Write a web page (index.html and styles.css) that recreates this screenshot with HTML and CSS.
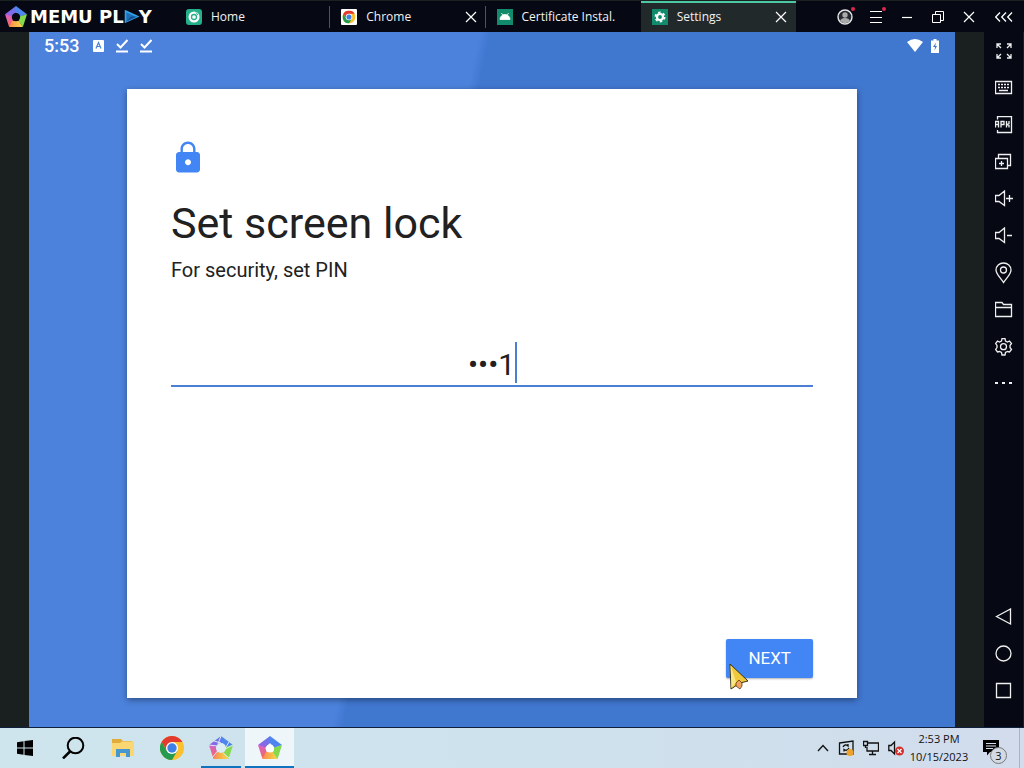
FILE: index.html
```html
<!DOCTYPE html>
<html lang="en">
<head>
<meta charset="UTF-8">
<meta name="viewport" content="width=device-width, initial-scale=1.0">
<title>MEmu Play - Settings</title>
<link rel="stylesheet" href="styles.css">
</head>
<body>

<svg width="0" height="0" class="defs" aria-hidden="true">
    <defs>
        <linearGradient id="violet" x1="0" y1="1" x2="1" y2="0"><stop offset="0" stop-color="#a45be0"/><stop offset="1" stop-color="#5a7df0"/></linearGradient>
        <linearGradient id="pink" x1="0" y1="0" x2="0" y2="1"><stop offset="0" stop-color="#d460c8"/><stop offset="1" stop-color="#fa6a58"/></linearGradient>
        <linearGradient id="amber" x1="0" y1="0" x2="1" y2="0"><stop offset="0" stop-color="#fb8a50"/><stop offset="1" stop-color="#f6dc44"/></linearGradient>
        <symbol id="pentagon" viewBox="0 0 24 24">
            <path fill="#4f86ee" d="M12 0 L24 9 L16 12 L12 7 Z"/>
            <path fill="url(#violet)" d="M12 0 L0 9 L7 12 L12 7 Z"/>
            <path fill="url(#pink)" d="M0 9 L4.500 23 L9 17 L7 11 Z"/>
            <path fill="url(#amber)" d="M4.500 23 H19.500 L15 16 H8 Z"/>
            <path fill="#84d94c" d="M24 9 L19.500 23 L15 16.500 L16 11.500 Z"/>
        </symbol>
        <symbol id="chrome" viewBox="0 0 24 24">
            <circle cx="12" cy="12" r="12" fill="#fbc02d"/>
            <path fill="#e33b2e" d="M1.600 6 A12 12 0 0 1 22.400 6 H12 L7 15 Z"/>
            <path fill="#259b4f" d="M1.600 6 A12 12 0 0 0 12 24 L17.200 15 L12 17 L6.800 15 Z"/>
            <circle cx="12" cy="12" r="6" fill="#fff"/>
            <circle cx="12" cy="12" r="4.700" fill="#3f7fe8"/>
        </symbol>
        <symbol id="cross" viewBox="0 0 12 12">
            <path d="M1 1 L11 11 M11 1 L1 11" fill="none" stroke="currentColor" stroke-width="1.200"/>
        </symbol>
        <symbol id="done" viewBox="0 0 12 14">
            <path d="M1 5 L4.500 8.500 L11.500 1 M0 12.500 H12" fill="none" stroke="currentColor" stroke-width="2"/>
        </symbol>
    </defs>
</svg>

<header class="titlebar">
    <div class="brand">
        <svg class="brand-logo" viewBox="0 0 24 24"><use href="#pentagon"/><circle cx="12" cy="12" r="4.500" fill="#060914"/></svg>
        <span class="brand-name">MEMU PL<svg class="brand-play" viewBox="0 0 13 12"><path d="M1 1 L12 6 L1 11 Z" fill="#1d6fb8" stroke="#35a3ea" stroke-width="1.500"/><path d="M1 11 L6 6 L12 6 Z" fill="#164f93"/></svg>Y</span>
    </div>
    <nav class="tabs">
        <div class="tab">
            <svg class="tab-icon" viewBox="0 0 16 16"><rect width="16" height="16" rx="3" fill="#24b08a"/><circle cx="8" cy="8" r="5.500" fill="#fff"/><circle cx="8" cy="8" r="2.500" fill="none" stroke="#24b08a" stroke-width="1.300"/><path d="M10 3.500 L12 6" stroke="#24b08a"/></svg>
            <a href="#" class="tab-name">Home</a>
        </div>
        <div class="tab">
            <svg class="tab-icon" viewBox="0 0 16 16"><rect width="16" height="16" rx="1" fill="#fff"/><use href="#chrome" x="1.500" y="1.500" width="13" height="13"/></svg>
            <a href="#" class="tab-name">Chrome</a>
            <button class="icon-btn" aria-label="Close Chrome"><svg width="12" height="12"><use href="#cross"/></svg></button>
        </div>
        <div class="tab">
            <svg class="tab-icon" viewBox="0 0 16 16"><rect width="16" height="16" fill="#128a6c"/><path d="M3 10.500 A5 5 0 0 1 13 10.500 Z M4.500 4 L6 6.500 M11.500 4 L10 6.500" fill="#fff" stroke="#fff" stroke-width=".8"/></svg>
            <a href="#" class="tab-name">Certificate Instal.</a>
        </div>
        <div class="tab active">
            <svg class="tab-icon" viewBox="0 0 16 16"><rect width="16" height="16" fill="#128a6c"/><circle cx="8" cy="8" r="4.700" fill="none" stroke="#fff" stroke-width="1.600" stroke-dasharray="2.500 2.420"/><circle cx="8" cy="8" r="3" fill="none" stroke="#fff" stroke-width="2.200"/></svg>
            <a href="#" class="tab-name">Settings</a>
            <button class="icon-btn" aria-label="Close Settings"><svg width="12" height="12"><use href="#cross"/></svg></button>
        </div>
    </nav>
    <div class="window-tools">
        <button class="icon-btn dot" aria-label="Account"><svg width="16" height="16" viewBox="0 0 16 16"><circle cx="8" cy="8" r="7" fill="#252a33" stroke="#e8e8e8" stroke-width="1.400"/><circle cx="8" cy="6" r="2.700" fill="#aaa"/><path d="M3 12 Q4 9 8 9 T13 12 Q8 16.500 3 12Z" fill="#aaa"/></svg></button>
        <button class="icon-btn dot" aria-label="Menu"><svg width="14" height="14" viewBox="0 0 14 14"><path d="M1 1.500 H13 M1 7.500 H13 M1 12.500 H13" stroke="currentColor"/></svg></button>
        <button class="icon-btn" aria-label="Minimize"><svg width="12" height="12" viewBox="0 0 12 12"><path d="M1 6.500 H11" stroke="currentColor" stroke-width="1.200"/></svg></button>
        <button class="icon-btn" aria-label="Restore"><svg width="12" height="12" viewBox="0 0 12 12"><path d="M.5 3.500 H8.500 V11.500 H.5 Z M3.500 3 V.5 H11.500 V9.500 H9" fill="none" stroke="currentColor"/></svg></button>
        <button class="icon-btn" aria-label="Close"><svg width="12" height="12"><use href="#cross"/></svg></button>
    </div>
    <button class="icon-btn collapse" aria-label="Collapse sidebar"><svg width="18" height="10" viewBox="0 0 18 10"><path d="M5 .5 L.7 5 L5 9.500 M11 .5 L6.700 5 L11 9.500 M17 .5 L12.700 5 L17 9.500" fill="none" stroke="currentColor" stroke-width="1.300"/></svg></button>
</header>

<div class="emulator">
    <main class="screen">
        <div class="status">
            <span class="clock">5:53</span>
            <svg width="11" height="12" viewBox="0 0 11 12"><rect width="11" height="12" rx="1" fill="#fff"/><path d="M3 8.500 L5.500 2.500 L8 8.500 M4 6.500 H7" fill="none" stroke="#4c82dc" stroke-width="1.200"/></svg>
            <svg width="12" height="14"><use href="#done"/></svg>
            <svg width="12" height="14"><use href="#done"/></svg>
            <div class="status-right">
                <svg width="16" height="13" viewBox="0 0 16 13"><path d="M0 3 Q8 -3 16 3 L8 13 Z" fill="#fff"/></svg>
                <svg width="8" height="14" viewBox="0 0 8 14"><path d="M2.500 0 H5.500 V1.500 H8 V14 H0 V1.500 H2.500 Z" fill="#fff"/><path d="M5 3.500 L2 8 H4 L3.500 11.500 L6 7 H4.200 Z" fill="#4077cf"/></svg>
            </div>
        </div>
        <section class="card">
            <svg class="lock" viewBox="0 0 24 24"><path fill="#4285f4" d="M18 8h-1V6c0-2.760-2.240-5-5-5S7 3.240 7 6v2H6c-1.100 0-2 .9-2 2v9.700c0 1.100.9 2 2 2h12c1.100 0 2-.9 2-2V10c0-1.100-.9-2-2-2zm-6 8.900c-1.100 0-2-.9-2-2s.9-2 2-2 2 .9 2 2-.9 2-2 2zM15.400 8H8.600V6c0-1.880 1.520-3.400 3.400-3.400 1.880 0 3.400 1.520 3.400 3.400v2z"/></svg>
            <h1>Set screen lock</h1>
            <label for="pin">For security, set PIN</label>
            <div class="pin-field">
                <input type="text" id="pin" name="pin" value="•••1" autocomplete="off">
                <span class="caret"></span>
            </div>
            <div class="actions">
                <button class="next">NEXT
                    <svg class="pointer" viewBox="0 0 20 28" aria-hidden="true"><path d="M1 1 L19 18 L11 20 L2 26 Z" fill="#f0c83c" stroke="#3a3218" stroke-width="1"/><path d="M1.500 2 L7 19 L2.500 25 Z" fill="#f9e88a"/><path d="M7 20 L10 17 L13 20 V23 L11 26 L7 23 Z" fill="#f2a45a" stroke="#5a3b1c" stroke-width=".8"/></svg>
                </button>
            </div>
        </section>
    </main>
    <aside class="sidebar">
        <button class="icon-btn" aria-label="Full screen"><svg width="18" height="18" viewBox="0 0 18 18"><path d="M2 6 V2 H6 M2 2 L6 6 M12 2 H16 V6 M16 2 L12 6 M2 12 V16 H6 M2 16 L6 12 M16 12 V16 H12 M16 16 L12 12"/></svg></button>
        <button class="icon-btn" aria-label="Keyboard"><svg width="18" height="18" viewBox="0 0 18 18"><path d="M.5 2.500 H16.500 V14.500 H.5 Z M4 11.500 H13"/><path d="M3 5.500 H14 M3 8.500 H14" stroke-dasharray="2 1"/></svg></button>
        <button class="icon-btn" aria-label="Install APK"><svg width="18" height="18" viewBox="0 0 18 18"><path d="M2.500 3.500 V.5 H16.500 V16.500 H2.500 V14 M.5 11.500 V5.500 H3.500 V11.500 M.5 8.500 H3.500 M6 11.500 V5.500 H9 V8.500 H6 M11.500 5 V11.500 M14 5 V7.500 L12 8.500 L14 9.500 V11.500"/></svg></button>
        <button class="icon-btn" aria-label="Multi instance"><svg width="18" height="18" viewBox="0 0 18 18"><path d="M.5 5.500 H12.500 V15.500 H.5 Z M3.500 5 V1.500 H15.500 V12.500 H13 M6.500 8 V13 M4 10.500 H9"/></svg></button>
        <button class="icon-btn" aria-label="Volume up"><svg width="18" height="18" viewBox="0 0 18 18"><path d="M.5 5.500 H4 L9.500 1 V15.500 L4 11.500 H.5 Z M11 8.500 H18 M14.500 5 V12"/></svg></button>
        <button class="icon-btn" aria-label="Volume down"><svg width="18" height="18" viewBox="0 0 18 18"><path d="M.5 5.500 H4 L9.500 1 V15.500 L4 11.500 H.5 Z M12 8.500 H17"/></svg></button>
        <button class="icon-btn" aria-label="Location"><svg width="18" height="22" viewBox="0 0 18 22"><path d="M8.500 20.500 C5 15 1 12 1 8 A7.500 7 0 0 1 16 8 C16 12 12.500 15 8.500 20.500 Z"/><circle cx="8.500" cy="8" r="3"/></svg></button>
        <button class="icon-btn" aria-label="Shared folder"><svg width="18" height="18" viewBox="0 0 18 18"><path d="M.5 15.500 V1.500 H7 L8.500 3.500 H16.500 V15.500 Z M.5 6.500 H16.500"/></svg></button>
        <button class="icon-btn" aria-label="Settings"><svg width="18" height="18" viewBox="0 0 18 18"><path d="M7 .7 H10 L10.500 3 L12.500 4 L14.500 3 L16.500 5.500 L15 7.500 V9.500 L16.500 11.500 L14.500 14 L12.500 13.500 L10.500 14.500 L10 17 H7 L6.500 14.500 L4.500 13.500 L2.500 14 L.6 11.500 L2 9.500 V7.500 L.6 5.500 L2.500 3 L4.500 4 L6.500 3 Z"/><circle cx="8.500" cy="8.700" r="3"/></svg></button>
        <button class="icon-btn" aria-label="More"><svg width="18" height="18" viewBox="0 0 18 18"><path d="M0 8 H3 M7 8 H10 M14 8 H17" stroke-width="2"/></svg></button>
        <div class="nav-keys">
            <button class="icon-btn" aria-label="Back"><svg width="18" height="18" viewBox="0 0 18 18"><path d="M1.500 8.500 L15.500 1 V16 Z"/></svg></button>
            <button class="icon-btn" aria-label="Home"><svg width="18" height="18" viewBox="0 0 18 18"><circle cx="8.500" cy="8.500" r="7.500"/></svg></button>
            <button class="icon-btn" aria-label="Recents"><svg width="18" height="18" viewBox="0 0 18 18"><path d="M1.500 1.500 H15.500 V15.500 H1.500 Z"/></svg></button>
        </div>
    </aside>
</div>

<footer class="taskbar">
    <button class="task" aria-label="Start"><svg width="16" height="16" viewBox="0 0 16 16"><path d="M0 2.200 L6.500 1.200 V7.500 H0 Z M7.500 1 L16 0 V7.500 H7.500 Z M0 8.500 H6.500 V14.800 L0 13.800 Z M7.500 8.500 H16 V16 L7.500 15 Z"/></svg></button>
    <button class="task" aria-label="Search"><svg width="24" height="22" viewBox="0 0 24 22"><circle cx="13.500" cy="8.500" r="7.800" fill="none" stroke="#000" stroke-width="2"/><path d="M8.500 14 L1 21.500" stroke="#000" stroke-width="2.500"/></svg></button>
    <button class="task" aria-label="File Explorer"><svg width="22" height="20" viewBox="0 0 22 20"><path d="M0 1 H9 L11 3 H20 V17 H0 Z" fill="#e2ac3a"/><path d="M0 5 H8 L10 3.500 H22 V18 H0 Z" fill="#fbd774"/><path d="M4 19 V11 H18 V19 H14 V15 H8 V19 Z" fill="#4697cf"/></svg></button>
    <button class="task" aria-label="Google Chrome"><svg width="24" height="24"><use href="#chrome"/></svg></button>
    <button class="task running" aria-label="Multi-MEmu"><svg width="24" height="24" viewBox="0 0 24 24"><use href="#pentagon"/><circle cx="12" cy="12" r="5" fill="#dcedf3"/><path d="M12 0 L9 8 M0 9 L8 10 M3 22 L8.500 15 M20 22 L14 17 M24 9 L16 13 M5 5 L12 7 M20 6 L17 11" stroke="#dcedf3" stroke-width="1"/></svg></button>
    <button class="task running current" aria-label="MEmu"><svg width="24" height="24" viewBox="0 0 24 24"><use href="#pentagon"/><circle cx="12" cy="12.500" r="4" fill="#fff"/></svg></button>
    <div class="tray">
        <svg width="12" height="16" viewBox="0 0 12 16"><path d="M1 11 L6 5.500 L11 11"/></svg>
        <svg width="16" height="16" viewBox="0 0 16 16"><path d="M1.500 3 L15 1 V14 H1.500 Z M5 7 Q7 3.500 10 6 V4 M11 8 Q9 11.500 6 9.500 V11.500"/><circle cx="12" cy="12.500" r="3.500" fill="#eea22c" stroke="none"/></svg>
        <svg width="16" height="16" viewBox="0 0 16 16"><path d="M5 3 H15.500 V11 H4 V7 M9.500 11 V14.500 M6 14.500 H13 M.5 1.500 H4.500 V5.500 H.5 Z M2.500 5.500 V8"/></svg>
        <svg width="16" height="16" viewBox="0 0 16 16"><path d="M.8 5.500 H3 L6.500 2 V14 L3 10.500 H.8 Z"/><circle cx="11.500" cy="11" r="4.500" fill="#d22f2f" stroke="none"/><path d="M9.500 9 L13.500 13 M13.500 9 L9.500 13" stroke="#fff" stroke-width="1.200"/></svg>
    </div>
    <div class="datetime">
        <span>2:53 PM</span>
        <span>10/15/2023</span>
    </div>
    <button class="notices" aria-label="Notifications">
        <svg width="16" height="16" viewBox="0 0 16 16"><path d="M0 0 H16 V12 H7 L4 15.500 V12 H0 Z"/><path d="M3 3.500 H13 M3 6 H13 M3 8.500 H10" stroke="#d3deeb"/></svg>
        <span class="badge">3</span>
    </button>
    <div class="show-desktop"></div>
</footer>

</body>
</html>
```
FILE: styles.css
```css
* {
    box-sizing: border-box;
}
body {
    margin: 0;
    height: 100vh;
    display: flex;
    flex-direction: column;
    overflow: hidden;
    background-color: #060914;
    color: white;
    font-family: Roboto, sans-serif;
}
button {
    font-family: inherit;
    border: none;
    padding: 0;
    background: none;
    color: inherit;
    cursor: pointer;
}
svg {
    display: block;
    flex: none;
}
.defs {
    position: absolute;
}
.icon-btn {
    display: flex;
    justify-content: center;
    align-items: center;
}

/* title bar */
.titlebar {
    height: 32px;
    display: flex;
    border-top: 1px solid #1b2020;
}
.brand {
    width: 175px;
    padding-left: 5px;
    display: flex;
    align-items: center;
    gap: 3px;
}
.brand-logo {
    width: 22px;
    height: 22px;
}
.brand-name {
    display: flex;
    align-items: center;
    white-space: pre;
    font: bold 18px "DejaVu Sans", sans-serif;
}
.brand-play {
    width: 15px;
    height: 13px;
}
.tabs {
    flex: 1;
    display: flex;
    max-width: 621px;
}
.tab {
    flex: 1;
    min-width: 0;
    display: flex;
    align-items: center;
    gap: 9px;
    padding: 0 9px 0 11px;
    background: linear-gradient(#50555c, #50555c) right center / 1px 22px no-repeat;
}
.tab:nth-child(3) {
    background: none;
}
.tab.active {
    background: #22292b;
    box-shadow: inset 0 2px #4cc8a4;
}
.tab-icon {
    width: 16px;
    height: 16px;
}
.tab-name {
    flex: 1;
    color: #f2f2f2;
    text-decoration: none;
    white-space: nowrap;
    font-family: "Open Sans", sans-serif;
    font-size: 12px;
    line-height: 16px;
}
.window-tools {
    margin-left: auto;
    display: flex;
}
.window-tools .icon-btn {
    width: 31px;
    position: relative;
}
.dot::after {
    content: "";
    position: absolute;
    top: 6px;
    right: 5px;
    width: 4px;
    height: 4px;
    border-radius: 50%;
    background: #e0254f;
}
.collapse {
    width: 40px;
}

/* emulator */
.emulator {
    flex: 1;
    display: flex;
    min-height: 0;
    background: #1a1f20;
    border-bottom: 1px solid #10203c;
}
.screen {
    flex: 1;
    margin: 0 29px;
    display: flex;
    flex-direction: column;
    background: linear-gradient(102deg, #4c82dc 42%, #4077cf 43%);
}
.status {
    height: 27px;
    padding: 0 16px 0 15px;
    display: flex;
    align-items: center;
    gap: 12px;
}
.clock {
    margin-right: 2px;
    font-size: 18px;
    font-weight: 500;
    line-height: 27px;
}
.status-right {
    margin-left: auto;
    display: flex;
    align-items: center;
    gap: 8px;
}
.card {
    flex: 1;
    margin: 30px 98px 29px;
    padding: 51px 44px 20px;
    display: flex;
    flex-direction: column;
    background: white;
    color: #212121;
    box-shadow: 0 2px 6px rgba(0, 0, 0, 0.4);
}
.lock {
    width: 36px;
    height: 36px;
    margin-left: -1px;
}
h1 {
    margin: 20px 0 0;
    font-size: 43px;
    font-weight: 400;
    line-height: 54px;
}
.card label {
    margin-top: 8px;
    font-size: 20px;
    line-height: 24px;
}
.pin-field {
    margin-top: 59px;
    height: 46px;
    padding-bottom: 2px;
    display: flex;
    justify-content: center;
    align-items: flex-end;
    border-bottom: 2px solid #4a7fd4;
}
.pin-field input {
    width: 48px;
    height: 40px;
    padding: 2px 0 0 1px;
    border: none;
    outline: none;
    background: none;
    color: #212121;
    font-family: Roboto, sans-serif;
    font-size: 30px;
}
.caret {
    width: 2px;
    height: 41px;
    background: #4a7fd4;
}
.actions {
    margin-top: auto;
    display: flex;
    justify-content: flex-end;
}
.next {
    position: relative;
    padding: 0 22px;
    border-radius: 2px;
    background: #4285f4;
    color: white;
    font-size: 17px;
    line-height: 39px;
    box-shadow: 0 1px 2px rgba(0, 0, 0, 0.3);
}
.pointer {
    position: absolute;
    left: 3px;
    top: 24px;
    width: 20px;
    height: 28px;
}

/* sidebar */
.sidebar {
    width: 40px;
    padding-bottom: 18px;
    display: flex;
    flex-direction: column;
    background: #060914;
    border-right: 1px solid #1b2020;
}
.sidebar .icon-btn {
    width: 100%;
    height: 37px;
}
.sidebar svg {
    fill: none;
    stroke: #f0f0f0;
    stroke-width: 1.3;
}
.nav-keys {
    margin-top: auto;
}

/* taskbar */
.taskbar {
    height: 40px;
    display: flex;
    background: linear-gradient(90deg, #cfe5ee, #cde2ec 50%, #d2dcec);
    color: #111;
    font-family: "Open Sans", sans-serif;
}
.task {
    width: 49px;
    display: flex;
    justify-content: center;
    align-items: center;
}
.running {
    background: linear-gradient(#0f73c0, #0f73c0) center bottom / 40px 2px no-repeat;
}
.current {
    background-color: #eef6fa;
    background-size: 100% 2px;
}
.tray {
    margin-left: auto;
    display: flex;
    align-items: center;
    gap: 9px;
}
.tray svg {
    fill: none;
    stroke: #111;
    stroke-width: 1.3;
}
.datetime {
    width: 70px;
    display: flex;
    flex-direction: column;
    justify-content: center;
    text-align: center;
    font-size: 11px;
    line-height: 18px;
}
.notices {
    position: relative;
    width: 45px;
    display: flex;
    align-items: center;
    padding-left: 9px;
}
.badge {
    position: absolute;
    left: 16px;
    top: 19px;
    width: 17px;
    height: 17px;
    border: 1px solid #777;
    border-radius: 50%;
    background: #d3dae4;
    color: #111;
    font-size: 11px;
    line-height: 15px;
    text-align: center;
}
.show-desktop {
    width: 5px;
    border-left: 1px solid #a9b5c2;
}
```
